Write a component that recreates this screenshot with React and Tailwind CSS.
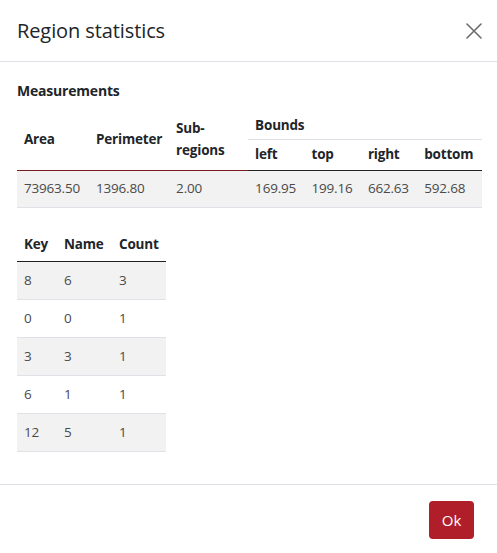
const bounds = ["left", "top", "right", "bottom"];
const measure = ["73963.50", "1396.80", "2.00", "169.95", "199.16", "662.63", "592.68"];
const keys = [
  ["8", "6", "3"],
  ["0", "0", "1"],
  ["3", "3", "1"],
  ["6", "1", "1"],
  ["12", "5", "1"],
];

export default function App() {
  return (
    <div className="w-[497px] h-[553px] bg-white text-[#212529] flex flex-col font-['Open_Sans',sans-serif]">
      {/* Header */}
      <div className="h-[62px] shrink-0 flex items-center justify-between pl-[17px] pr-[15px] border-b border-[#dee2e6]">
        <h1 className="text-[20px] tracking-[-0.1px] text-[#212529]">Region statistics</h1>
        <svg width="16" height="16" viewBox="0 0 16 16" className="text-[#6c6c6c]">
          <path d="M1 1 L15 15 M15 1 L1 15" stroke="currentColor" strokeWidth="1.6" strokeLinecap="round" />
        </svg>
      </div>

      {/* Body */}
      <div className="flex-1 px-[17px] pt-[18px]">
        <h2 className="text-[14px] font-bold mb-[8px] tracking-[-0.2px]">Measurements</h2>

        <table className="w-[465px] border-collapse text-[13.5px] tracking-[-0.2px]">
          <thead>
            <tr className="h-[30px]">
              <th rowSpan={2} className="w-[72px] text-left font-bold px-[7px] border-b border-[#7a1b22]">Area</th>
              <th rowSpan={2} className="w-[80px] text-left font-bold px-[7px] border-b border-[#7a1b22]">Perimeter</th>
              <th rowSpan={2} className="w-[79px] text-left font-bold px-[7px] leading-[22px] border-b border-[#7a1b22]">Sub-<br />regions</th>
              <th colSpan={4} className="text-left font-bold px-[7px] border-b border-[#dee2e6] align-top pt-[6px]">Bounds</th>
            </tr>
            <tr className="h-[31px]">
              {bounds.map((b) => (
                <th key={b} className="text-left font-bold px-[7px] border-b border-[#222]">{b}</th>
              ))}
            </tr>
          </thead>
          <tbody>
            <tr className="h-[37px] bg-[#f2f2f2] border-b border-[#dee2e6]">
              {measure.map((m, i) => (
                <td key={i} className="px-[7px] text-[#4a4a4a]">{m}</td>
              ))}
            </tr>
          </tbody>
        </table>

        <table className="w-[149px] mt-[19px] border-collapse text-[13.5px] tracking-[-0.2px]">
          <thead>
            <tr className="h-[35px] border-b border-[#222]">
              <th className="w-[40px] text-left font-bold px-[7px]">Key</th>
              <th className="w-[55px] text-left font-bold px-[7px]">Name</th>
              <th className="text-left font-bold px-[7px]">Count</th>
            </tr>
          </thead>
          <tbody>
            {keys.map((r, i) => (
              <tr key={i} className={`h-[38px] border-b border-[#dee2e6] ${i % 2 === 0 ? "bg-[#f2f2f2]" : ""}`}>
                {r.map((c, j) => (
                  <td key={j} className="px-[7px] text-[#4a4a4a]">{c}</td>
                ))}
              </tr>
            ))}
          </tbody>
        </table>
      </div>

      {/* Footer */}
      <div className="h-[69px] shrink-0 border-t border-[#dee2e6] flex items-center justify-end pr-[23px]">
        <button className="w-[45px] h-[38px] mt-[2px] rounded-[4px] bg-[#b01e2a] text-white text-[15px]">Ok</button>
      </div>
    </div>
  );
}
